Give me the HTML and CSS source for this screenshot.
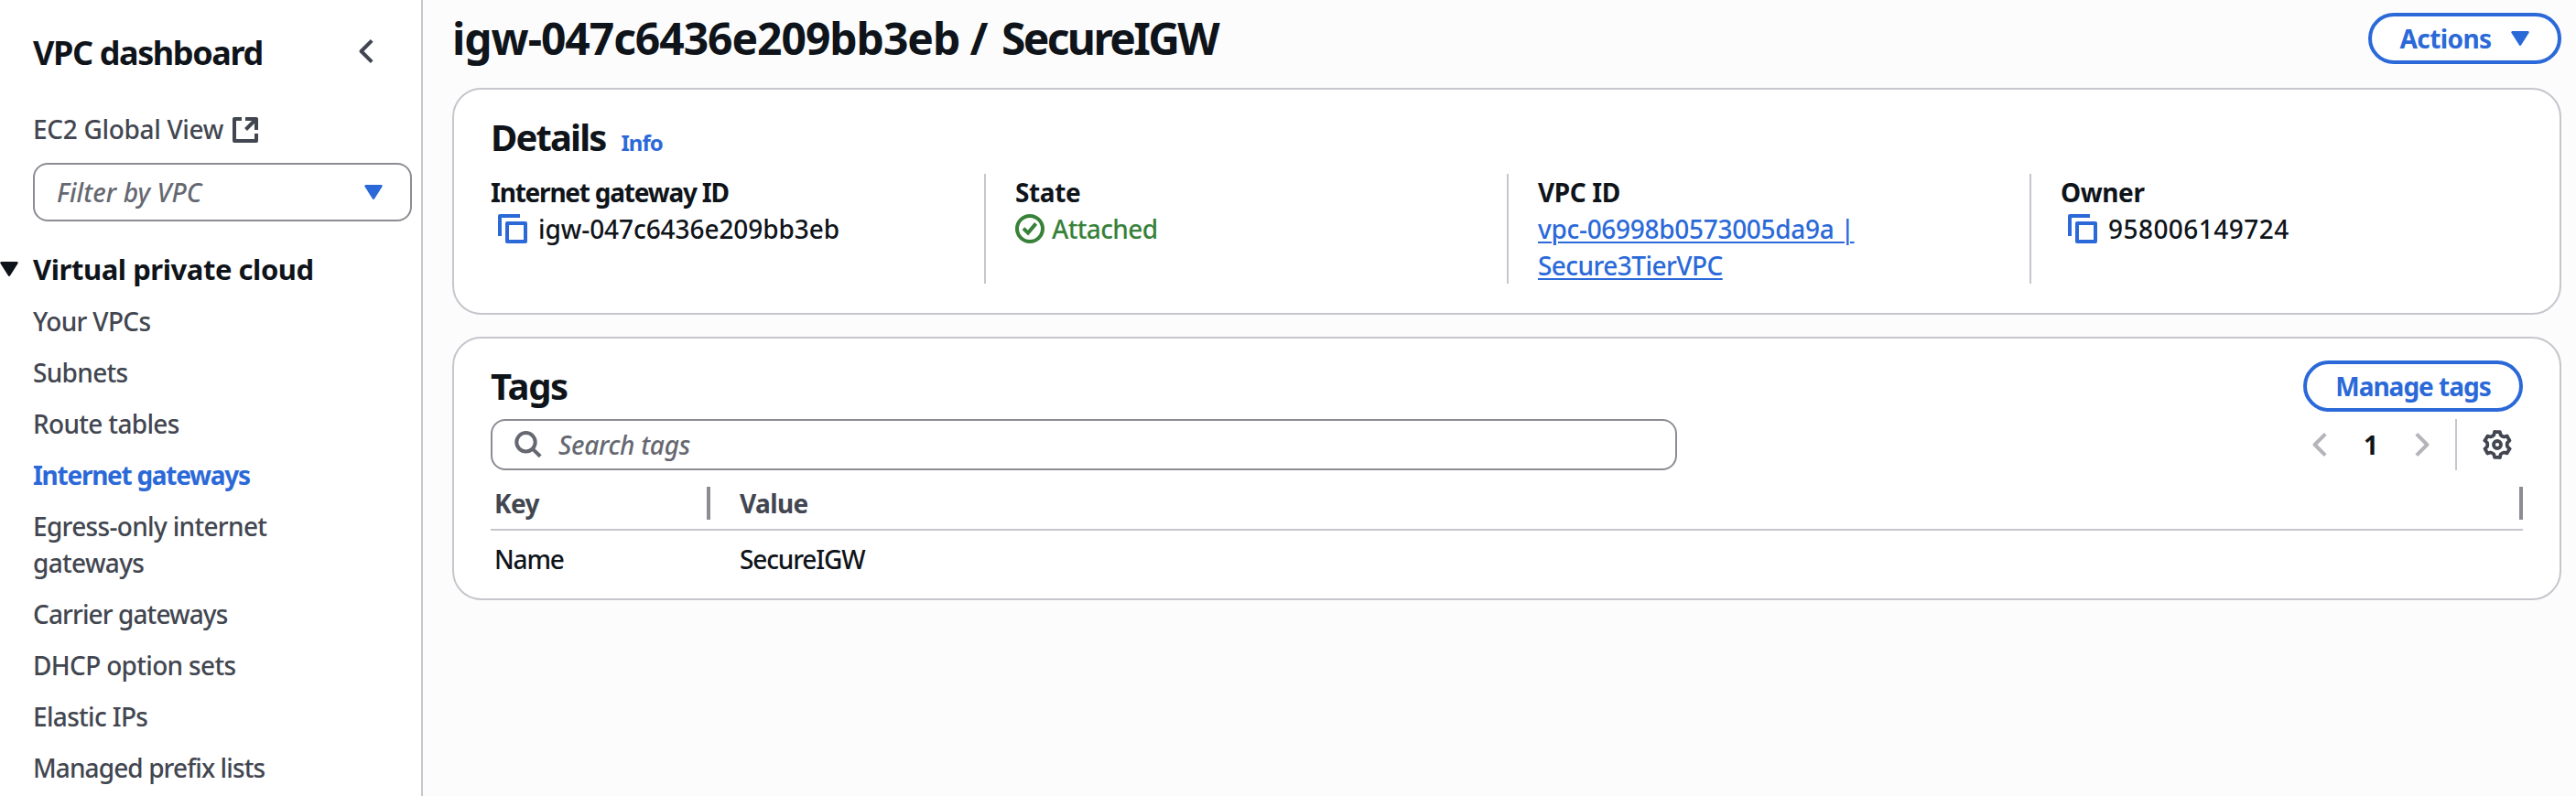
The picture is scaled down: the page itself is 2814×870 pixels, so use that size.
FILE: index.html
```html
<!DOCTYPE html>
<html lang="en">
<head>
<meta charset="utf-8">
<title>SecureIGW | VPC dashboard</title>
<link rel="stylesheet" href="styles.css">
</head>
<body>
<svg class="sprite" aria-hidden="true">
  <symbol id="copy" viewBox="0 0 32 32"><path d="M2 24V2h22" fill="none" stroke="currentColor" stroke-width="4" stroke-linejoin="round"/><path d="M10 10h20v20H10z" fill="none" stroke="currentColor" stroke-width="4" stroke-linejoin="round"/></symbol>
  <symbol id="caret" viewBox="0 0 20 16"><path d="M1.6 1.4h16.8L10 14.6z" fill="currentColor" stroke="currentColor" stroke-width="2.6" stroke-linejoin="round"/></symbol>
  <symbol id="angle" viewBox="0 0 16 26"><path d="M14.2 1.4 2.6 13l11.6 11.6" fill="none" stroke="currentColor" stroke-width="4" stroke-linejoin="round"/></symbol>
</svg>
<div class="app">
  <nav class="sidebar">
    <div class="side-head"><h2 class="side-title">VPC dashboard</h2><svg class="angle angle-dark"><use href="#angle"/></svg></div>
    <a class="global-view"><span>EC2 Global View</span><svg class="external" viewBox="0 0 28 28"><path d="M10 2H2v24h24V18M14 2h12v12M26 2 14.5 13.5" fill="none" stroke="currentColor" stroke-width="4" stroke-linejoin="round"/></svg></a>
    <div class="select"><span class="placeholder ph-filter">Filter by VPC</span><svg class="caret"><use href="#caret"/></svg></div>
    <div class="section"><svg class="caret"><use href="#caret"/></svg><h3 class="section-title">Virtual private cloud</h3></div>
    <ul class="links">
      <li>Your VPCs</li>
      <li>Subnets</li>
      <li>Route tables</li>
      <li class="active">Internet gateways</li>
      <li>Egress-only internet<br>gateways</li>
      <li class="tight">Carrier gateways</li>
      <li>DHCP option sets</li>
      <li>Elastic IPs</li>
      <li class="tight">Managed prefix lists</li>
    </ul>
  </nav>
  <main class="main">
    <header class="page-head"><h1 class="page-title">igw-047c6436e209bb3eb / <span class="gateway-name">SecureIGW</span></h1><button class="btn btn-actions"><span>Actions</span><svg class="caret"><use href="#caret"/></svg></button></header>
    <section class="card details">
      <div class="card-head"><h2 class="card-title">Details</h2><a class="info">Info</a></div>
      <div class="fields">
        <div class="field"><div class="label label-id">Internet gateway ID</div><div class="value indented"><svg class="icon32 blue"><use href="#copy"/></svg><span class="gateway-id">igw-047c6436e209bb3eb</span></div></div>
        <div class="field"><div class="label">State</div><div class="value status"><svg class="icon32" viewBox="0 0 32 32"><g fill="none" stroke="currentColor" stroke-width="4"><circle cx="16" cy="16" r="14"/><path d="m9 15.6 5 5 8.6-10.2"/></g></svg><span>Attached</span></div></div>
        <div class="field"><div class="label">VPC ID</div><div class="value"><a class="vpc-link">vpc-06998b0573005da9a |<br><span class="vpc-name">Secure3TierVPC</span></a></div></div>
        <div class="field"><div class="label">Owner</div><div class="value indented account"><svg class="icon32 blue"><use href="#copy"/></svg><span>958006149724</span></div></div>
      </div>
    </section>
    <section class="card tags">
      <div class="tags-head"><h2 class="card-title">Tags</h2><button class="btn btn-manage">Manage tags</button></div>
      <div class="tools">
        <div class="search"><svg class="search-icon" viewBox="0 0 30 30"><g fill="none" stroke="currentColor" stroke-width="4"><circle cx="12.5" cy="12.3" r="10.2"/><path d="m19.8 19.6 8.4 8.2"/></g></svg><span class="placeholder ph-search">Search tags</span></div>
        <div class="pager"><svg class="angle"><use href="#angle"/></svg><span class="page">1</span><svg class="angle flip"><use href="#angle"/></svg></div>
        <div class="prefs"><svg class="icon32" viewBox="-16 -16 32 32"><g fill="none" stroke="currentColor" stroke-width="3.8" stroke-linecap="round" stroke-linejoin="round"><path id="tooth" d="M-2.8-13.9H2.8L3.7-10.6Q5.2-9 7.3-8.5L10.6-9.4"/><use href="#tooth" transform="rotate(60)"/><use href="#tooth" transform="rotate(120)"/><use href="#tooth" transform="rotate(180)"/><use href="#tooth" transform="rotate(240)"/><use href="#tooth" transform="rotate(300)"/><circle r="4"/></g></svg></div>
      </div>
      <div class="table">
        <div class="row head"><div class="cell key">Key</div><div class="cell val">Value</div></div>
        <div class="row"><div class="cell key">Name</div><div class="cell val">SecureIGW</div></div>
      </div>
    </section>
  </main>
</div>
</body>
</html>
```
FILE: styles.css
```css
* { box-sizing: border-box; }
body { margin: 0; width: 2814px; height: 870px; overflow: hidden; background: #fcfcfd; color: #0f141a; font: 500 28px/40px "Noto Sans", "Open Sans", sans-serif; }
h1, h2, h3, ul { margin: 0; padding: 0; list-style: none; }
svg { display: block; flex: none; }
.sprite { position: absolute; width: 0; height: 0; }
.app { display: flex; height: 870px; }

.sidebar { width: 462px; flex: none; background: #fff; border-right: 2px solid #c6c6cd; color: #424650; }
.side-head { display: flex; justify-content: space-between; align-items: flex-start; padding: 36px 52px 0 36px; height: 121px; }
.side-title { font-size: 36px; line-height: 44px; letter-spacing: -1.4px; color: #0f141a; }
.angle { width: 16px; height: 26px; color: #b4b4bb; }
.angle-dark { color: #424650; margin-top: 7px; }
.flip { transform: scaleX(-1); }
.global-view { display: flex; align-items: flex-start; gap: 10px; padding-left: 36px; height: 57px; letter-spacing: -.32px; }
.external { width: 28px; height: 28px; margin-top: 7px; }
.select { margin-left: 36px; width: 414px; height: 64px; border: 2px solid #8c8c94; border-radius: 16px; display: flex; align-items: center; justify-content: space-between; padding: 0 30px 0 24px; }
.select .caret { color: #2b69d8; margin-bottom: 1px; }
.placeholder { font-style: italic; color: #656871; }
.ph-filter { letter-spacing: .1px; }
.ph-search { letter-spacing: -.3px; }
.caret { width: 20px; height: 16px; }
.section { display: flex; gap: 16px; align-items: flex-start; margin-top: 32px; height: 57px; color: #0f141a; }
.section .caret { margin-top: 12px; }
.section-title { font-size: 31px; line-height: 40px; letter-spacing: -.45px; }
.links { padding-left: 36px; display: flex; flex-direction: column; gap: 16px; letter-spacing: -.68px; }
.links .tight { letter-spacing: -.9px; }
.links .active { color: #2b69d8; font-weight: 700; letter-spacing: -1.27px; }

.main { flex: 1; padding: 0 16px 0 32px; }
.page-head { height: 96px; display: flex; justify-content: space-between; align-items: flex-start; padding-top: 14px; }
.page-title { font-size: 48px; line-height: 56px; letter-spacing: -1.05px; }
.gateway-name { margin-left: 4px; letter-spacing: -2.65px; }
.btn { height: 56px; border: 4px solid #2b69d8; border-radius: 28px; background: #fff; color: #2b69d8; font: inherit; font-weight: 700; padding: 0; display: flex; align-items: center; justify-content: center; }
.btn-actions { width: 211px; gap: 22px; letter-spacing: -.6px; }
.btn-manage { width: 240px; letter-spacing: -1px; }
.card { background: #fff; border: 2px solid #c6c6cd; border-radius: 32px; padding: 0 40px; }
.details { height: 248px; margin-bottom: 24px; padding-top: 28px; }
.card-head { display: flex; align-items: baseline; gap: 17px; height: 64px; }
.card-title { font-size: 40px; line-height: 48px; letter-spacing: -1.85px; }
.info { font-size: 24px; font-weight: 700; letter-spacing: -1px; color: #2b69d8; }
.fields { display: grid; grid-template-columns: repeat(4, 1fr); margin: 0 -32px; height: 120px; }
.field { border-left: 2px solid #c6c6cd; padding-left: 32px; }
.field:first-child { border-color: transparent; }
.label { font-weight: 700; letter-spacing: -.4px; }
.label-id { margin-left: -2px; letter-spacing: -1.22px; }
.value { display: flex; align-items: center; }
.indented { padding-left: 6px; gap: 12px; }
.gateway-id { letter-spacing: -.08px; }
.account { padding-left: 8px; letter-spacing: .45px; }
.icon32 { width: 32px; height: 32px; }
.blue { color: #2b69d8; }
.status { color: #378139; gap: 8px; letter-spacing: -.65px; }
.vpc-link { color: #2b69d8; letter-spacing: -.3px; text-decoration: underline; text-decoration-thickness: 2px; text-underline-offset: 3px; }
.vpc-name { letter-spacing: -.55px; }

.tags { height: 288px; padding-top: 24px; }
.tags-head { display: flex; justify-content: space-between; height: 64px; }
.tags-head .card-title { margin-top: 4px; letter-spacing: -1.35px; }
.tools { display: flex; height: 56px; }
.search { width: 1296px; border: 2px solid #8c8c94; border-radius: 16px; display: flex; align-items: center; padding-left: 24px; gap: 18px; }
.search-icon { width: 30px; height: 30px; color: #656871; }
.pager { margin-left: auto; width: 128px; display: flex; align-items: center; justify-content: space-between; }
.page { font-weight: 700; }
.prefs { margin-left: 28px; width: 74px; border-left: 2px solid #c6c6cd; padding-left: 28px; display: flex; align-items: center; color: #424650; }
.table { padding-top: 18px; }
.row { display: flex; height: 62px; padding-top: 13px; letter-spacing: -1.15px; }
.row.head { height: 48px; padding-top: 0; border-bottom: 2px solid #c6c6cd; font-weight: 700; letter-spacing: -.6px; color: #424650; }
.cell { padding-left: 4px; height: 36px; line-height: 36px; }
.key { width: 240px; }
.val { flex: 1; padding-left: 32px; }
.head .cell { border-right: 4px solid #8c8c94; }
```
